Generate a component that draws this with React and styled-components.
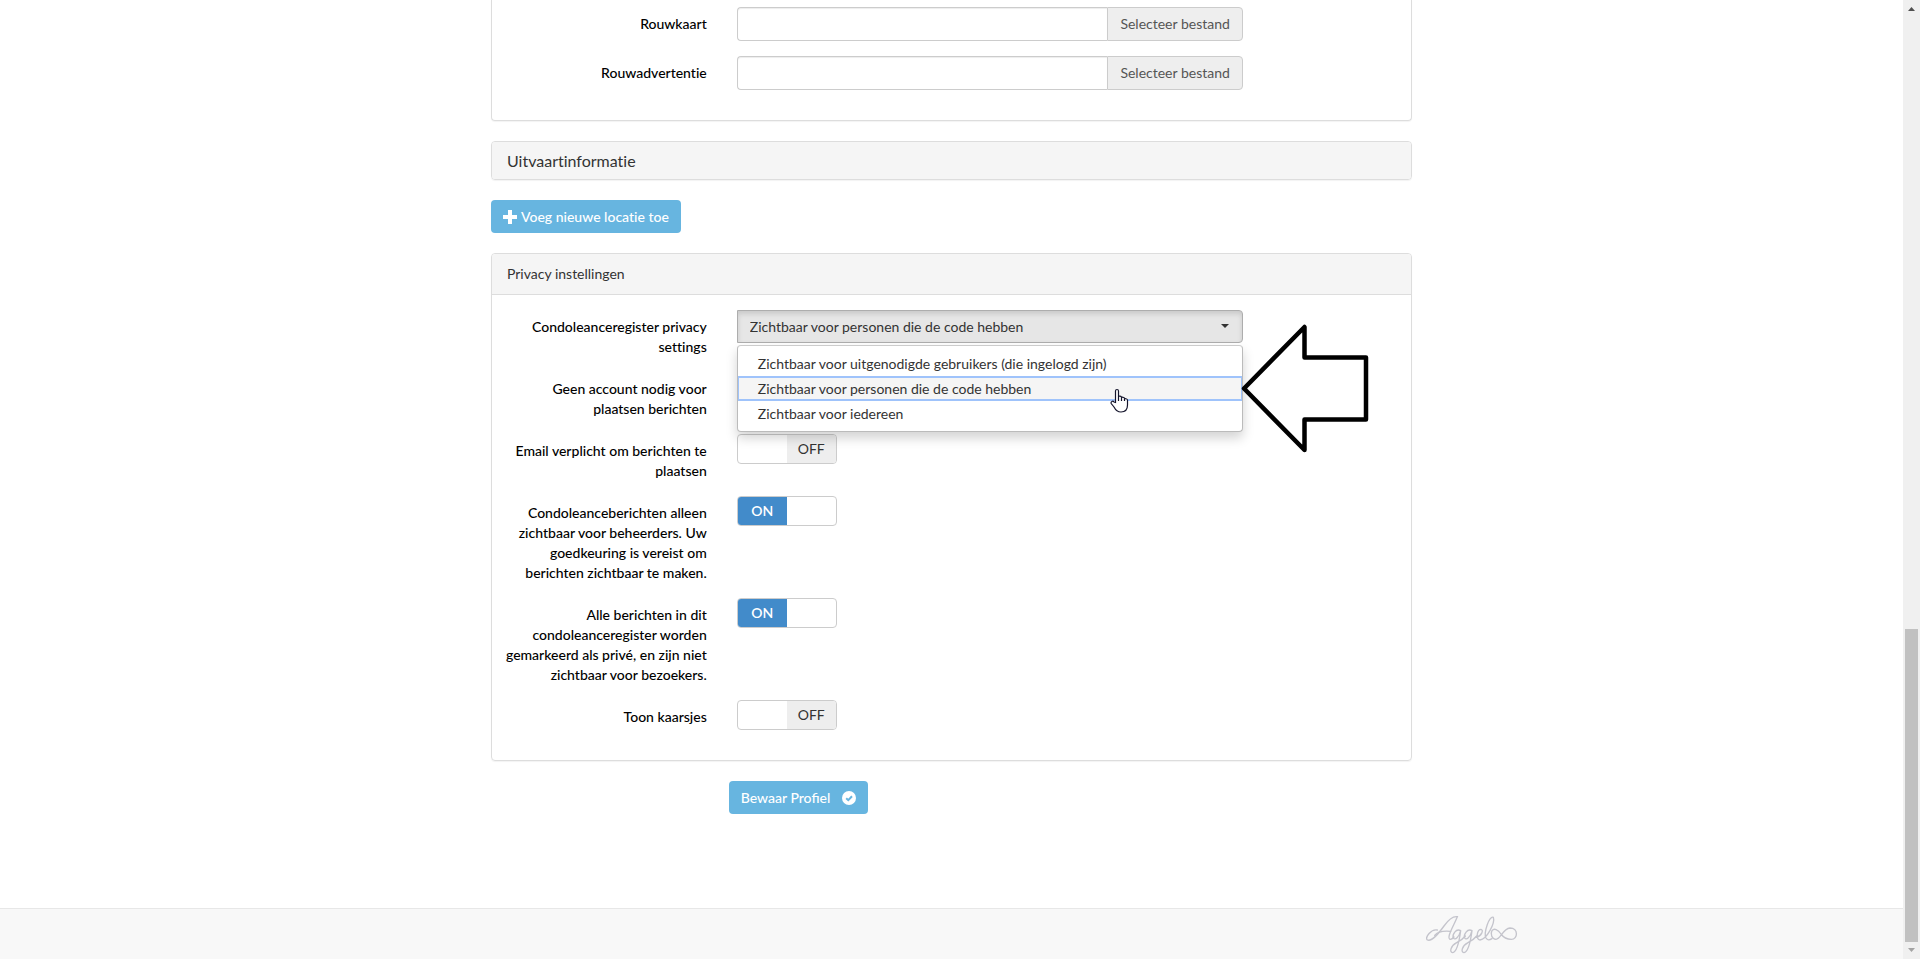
import { useState } from "react";
import styled, { createGlobalStyle, css } from "styled-components";

const GlobalStyle = createGlobalStyle`
  * {
    box-sizing: border-box;
  }
  body {
    margin: 0;
    background: #fff;
    color: #333;
    font-family: Lato, "Liberation Sans", sans-serif;
    font-size: 14px;
    font-variant-ligatures: none;
    line-height: 20px;
  }
  button,
  input,
  select {
    font: inherit;
    font-variant-ligatures: inherit;
    color: inherit;
    margin: 0;
  }
`;

const Shell = styled.div`
  display: grid;
  grid-template-columns: minmax(0, 1fr) 17px;
  height: 100vh;
  overflow: hidden;
`;

const Page = styled.div`
  display: flex;
  flex-direction: column;
`;

const Main = styled.main`
  flex: 1;
  width: 100%;
  max-width: 921px;
  margin: 0 auto;
  display: flex;
  flex-direction: column;
  gap: 20px;
`;

const Panel = styled.section`
  border: 1px solid #ddd;
  border-radius: 4px;
  box-shadow: 0 1px 1px rgba(0, 0, 0, 0.05);
  ${({ $continued }) =>
    $continued &&
    css`
      border-top: 0;
      border-radius: 0 0 4px 4px;
    `}
`;

const PanelHeading = styled.h2`
  margin: 0;
  padding: 10px 15px;
  background: #f5f5f5;
  border-radius: 3px 3px 0 0;
  border-bottom: 1px solid #ddd;
  font-size: 14px;
  font-weight: 400;
  line-height: 20px;
`;

const PanelTitle = styled.h2`
  margin: 0;
  padding: 10px 15px;
  background: #f5f5f5;
  border-radius: 3px;
  font-size: 16px;
  font-weight: 400;
  line-height: 17px;
`;

const PanelBody = styled.div`
  padding: ${({ $continued }) => ($continued ? "7px" : "15px")} 0 15px;
`;

const FormRow = styled.div`
  display: grid;
  grid-template-columns: 3fr 7fr 2fr;
  align-items: start;
  margin-bottom: 15px;
`;

const Label = styled.label`
  padding: 7px 15px 0 10px;
  color: #000;
  font-weight: 500;
  text-align: right;
`;

const Control = styled.div`
  padding: 0 15px;
`;

const InputGroup = styled.div`
  display: flex;
  height: 34px;
`;

const TextInput = styled.input`
  flex: 1;
  min-width: 0;
  padding: 6px 12px;
  background: #fff;
  border: 1px solid #ccc;
  border-right: 0;
  border-radius: 4px 0 0 4px;
  box-shadow: inset 0 1px 1px rgba(0, 0, 0, 0.075);
`;

const FileButton = styled.button`
  padding: 6px 12px;
  background: #eee;
  border: 1px solid #ccc;
  border-radius: 0 4px 4px 0;
  color: #555;
`;

const Button = styled.button`
  display: flex;
  align-items: center;
  gap: ${({ $gap }) => $gap};
  height: 33px;
  padding: 0 12px;
  background: #67b5e0;
  border: 0;
  border-radius: 4px;
  color: #fff;
  font-weight: 500;
`;

const Toolbar = styled.div`
  display: flex;
`;

const SaveRow = styled.div`
  display: grid;
  grid-template-columns: 3fr 9fr;
  margin: 0 -15px 94px;
  font-variant-ligatures: normal;
`;

const SaveCell = styled.div`
  display: flex;
  grid-column: 2;
  padding: 0 15px;
`;

const Dropdown = styled.div`
  position: relative;
`;

const Select = styled.select`
  display: block;
  width: 100%;
  height: 33px;
  padding: 0 12px;
  appearance: none;
  background: #e6e6e6;
  border: 1px solid #adadad;
  border-radius: 0 4px 4px 0;
  box-shadow: inset 0 3px 5px rgba(0, 0, 0, 0.125);
`;

const Caret = styled.svg`
  position: absolute;
  top: 14px;
  right: 14px;
  pointer-events: none;
`;

const Menu = styled.ul`
  position: absolute;
  top: 35px;
  left: 0;
  right: 0;
  z-index: 1;
  margin: 0;
  padding: 5px 0;
  list-style: none;
  background: #fff;
  border: 1px solid #bbb;
  border-top-color: #ccc;
  border-radius: 4px;
  box-shadow: 0 6px 12px rgba(0, 0, 0, 0.175);
`;

const Option = styled.li`
  height: 25px;
  padding: 0 20px;
  line-height: 25px;
  ${({ $active }) =>
    $active &&
    css`
      background: #f5f5f5;
      box-shadow: inset 0 2px #9fc3fb, inset 0 -2px #9fc3fb,
        inset 1px 0 #9fc3fb, inset -1px 0 #9fc3fb;
    `}
`;

const Pointer = styled.svg`
  position: absolute;
  z-index: 2;
  top: 78px;
  right: 114px;
`;

const BigArrow = styled.svg`
  position: absolute;
  z-index: 2;
  top: 13px;
  left: calc(100% - 2px);
`;

const Switch = styled.span`
  position: relative;
  display: grid;
  grid-template-columns: 1fr 1fr;
  width: 100px;
  height: 30px;
  overflow: hidden;
  border: 1px solid #ccc;
  border-radius: 4px;
  line-height: 28px;
  text-align: center;
`;

const SwitchInput = styled.input`
  position: absolute;
  inset: 0;
  width: 100%;
  height: 100%;
  opacity: 0;
  cursor: pointer;
`;

const SwitchOn = styled.span`
  background: #428bca;
  color: #fff;
  font-weight: 600;
`;

const SwitchOff = styled.span`
  grid-column: 2;
  background: #eee;
`;

const Footer = styled.footer`
  height: 51px;
  background: #f8f8f8;
  border-top: 1px solid #e7e7e7;
`;

const FooterInner = styled.div`
  display: flex;
  justify-content: flex-end;
  max-width: 1170px;
  margin: 0 auto;
  padding: 5px 15px;
`;

const Scrollbar = styled.div`
  display: flex;
  flex-direction: column;
  background: #f0f0f0;
`;

const ScrollArrow = styled.svg`
  flex: none;
  width: 17px;
  height: 17px;
`;

const ScrollSpace = styled.div`
  flex: 612;
`;

const ScrollThumb = styled.div`
  flex: 313;
  margin: 0 2px;
  background: #c1c1c1;
`;

const uploads = [
  { id: "rouwkaart", label: "Rouwkaart" },
  { id: "rouwadvertentie", label: "Rouwadvertentie" },
];

const options = [
  "Zichtbaar voor uitgenodigde gebruikers (die ingelogd zijn)",
  "Zichtbaar voor personen die de code hebben",
  "Zichtbaar voor iedereen",
];

// covered: the open privacy menu lies over this switch
const switches = [
  { id: "account", label: "Geen account nodig voor plaatsen berichten", on: false, covered: true },
  { id: "email", label: "Email verplicht om berichten te plaatsen", on: false },
  {
    id: "beheerders",
    label:
      "Condoleanceberichten alleen zichtbaar voor beheerders. Uw goedkeuring is vereist om berichten zichtbaar te maken.",
    on: true,
  },
  {
    id: "prive",
    label:
      "Alle berichten in dit condoleanceregister worden gemarkeerd als privé, en zijn niet zichtbaar voor bezoekers.",
    on: true,
  },
  { id: "kaarsjes", label: "Toon kaarsjes", on: false },
];

const PlusIcon = () => (
  <svg width="14" height="14" viewBox="0 0 14 14" fill="#fff">
    <path d="M5 0h4v5h5v4H9v5H5V9H0V5h5z" />
  </svg>
);

const CheckIcon = () => (
  <svg width="14" height="14" viewBox="0 0 14 14">
    <circle cx="7" cy="7" r="7" fill="#fff" />
    <path d="M4.200 7.200 6.300 9.200 10 5.300" fill="none" stroke="#67b5e0" strokeWidth="2" />
  </svg>
);

const UploadRow = ({ id, label }) => (
  <FormRow>
    <Label htmlFor={id}>{label}</Label>
    <Control>
      <InputGroup>
        <TextInput id={id} type="text" />
        <FileButton type="button">Selecteer bestand</FileButton>
      </InputGroup>
    </Control>
  </FormRow>
);

const SwitchRow = ({ id, label, on, covered }) => {
  const [checked, setChecked] = useState(on);

  return (
    <FormRow>
      <Label htmlFor={id}>{label}</Label>
      <Control>
        <Switch>
          {checked ? (
            <SwitchOn>{!covered && "ON"}</SwitchOn>
          ) : (
            <SwitchOff>{!covered && "OFF"}</SwitchOff>
          )}
          <SwitchInput
            id={id}
            type="checkbox"
            checked={checked}
            onChange={(e) => setChecked(e.target.checked)}
          />
        </Switch>
      </Control>
    </FormRow>
  );
};

const PrivacySelect = () => {
  const [value, setValue] = useState(options[1]);

  return (
    <FormRow>
      <Label htmlFor="privacy">Condoleanceregister privacy settings</Label>
      <Control>
        <Dropdown>
          <Select id="privacy" value={value} onChange={(e) => setValue(e.target.value)}>
            {options.map((option) => (
              <option key={option}>{option}</option>
            ))}
          </Select>
          <Caret width="8" height="4" viewBox="0 0 8 4">
            <path d="M0 0h8L4 4z" fill="#333" />
          </Caret>
          <Menu>
            {options.map((option) => (
              <Option key={option} $active={option === value} onClick={() => setValue(option)}>
                {option}
              </Option>
            ))}
          </Menu>
          <Pointer width="19" height="26" viewBox="0 0 19 26">
            <path
              d="M5.5 14.5V3c0-2 3-2 3 0v6c0-1.200 3-1.200 3 .5v.5c0-1.200 3-1 3 .5v.8c0-1 3-.8 3 .9V17c0 4-2 7-6.500 7-4 0-5.500-2-7-5L1.200 15.500C.5 13.500 3 12.500 4 14z"
              fill="#fff"
              stroke="#14142b"
              strokeWidth="1.200"
            />
            <path d="M8.500 9v4M11.500 10v3M14.500 11v2" stroke="#14142b" strokeWidth="1.200" />
          </Pointer>
          <BigArrow width="128" height="131" viewBox="0 0 128 131">
            <path
              d="M3 65.500 63.500 4v30.500H125v62H63.500V127z"
              fill="none"
              stroke="#000"
              strokeWidth="4.500"
              strokeLinejoin="round"
            />
          </BigArrow>
        </Dropdown>
      </Control>
    </FormRow>
  );
};

const Logo = () => (
  <svg
    width="96"
    height="40"
    viewBox="18 12 288 120"
    fill="none"
    stroke="#c4c4cc"
    strokeWidth="4"
    strokeLinecap="round"
  >
    <path d="M52 60C34 56 14 82 22 90c14 6 34-20 50-42C86 28 98 18 112 20c-6 16-20 40-24 55-4 15 4 17 14 6" />
    <path d="M44 76c10-12 28-14 48-12" />
    <path d="M122 62c-14-8-26 12-22 22 5 8 17-2 22-22-4 30-12 64-24 66-11-2-6-20 12-30 13-7 20-12 26-20" />
    <path d="M156 62c-14-8-26 12-22 22 5 8 17-2 22-22-4 30-12 64-24 66-11-2-6-20 12-30 13-7 20-12 26-20" />
    <path d="M168 82c17-4 24-22 15-24-12 0-17 32-3 32 20-2 46-50 40-68-12-6-30 46-22 62 4 7 10 7 18 2" />
    <path d="M243 72c-9-14-21-18-27-10-6 10 0 26 12 26 14 0 20-32 42-34 26 0 24 34 4 34-14 0-24-6-31-16z" />
  </svg>
);

const App = () => {
  return (
    <>
      <GlobalStyle />
      <Shell>
        <Page>
          <Main>
            <Panel $continued>
              <PanelBody $continued>
                {uploads.map((item) => (
                  <UploadRow key={item.id} {...item} />
                ))}
              </PanelBody>
            </Panel>
            <Panel>
              <PanelTitle>Uitvaartinformatie</PanelTitle>
            </Panel>
            <Toolbar>
              <Button type="button" $gap="4px">
                <PlusIcon />
                Voeg nieuwe locatie toe
              </Button>
            </Toolbar>
            <Panel>
              <PanelHeading>Privacy instellingen</PanelHeading>
              <PanelBody>
                <PrivacySelect />
                {switches.map((item) => (
                  <SwitchRow key={item.id} {...item} />
                ))}
              </PanelBody>
            </Panel>
            <SaveRow>
              <SaveCell>
                <Button type="submit" $gap="12px">
                  Bewaar Profiel
                  <CheckIcon />
                </Button>
              </SaveCell>
            </SaveRow>
          </Main>
          <Footer>
            <FooterInner>
              <Logo />
            </FooterInner>
          </Footer>
        </Page>
        <Scrollbar>
          <ScrollArrow viewBox="0 0 17 17">
            <path d="M5 11h7L8.500 7z" fill="#505050" />
          </ScrollArrow>
          <ScrollSpace />
          <ScrollThumb />
          <ScrollArrow viewBox="0 0 17 17">
            <path d="M5 6h7L8.500 10z" fill="#a3a3a3" />
          </ScrollArrow>
        </Scrollbar>
      </Shell>
    </>
  );
};

export default App;
